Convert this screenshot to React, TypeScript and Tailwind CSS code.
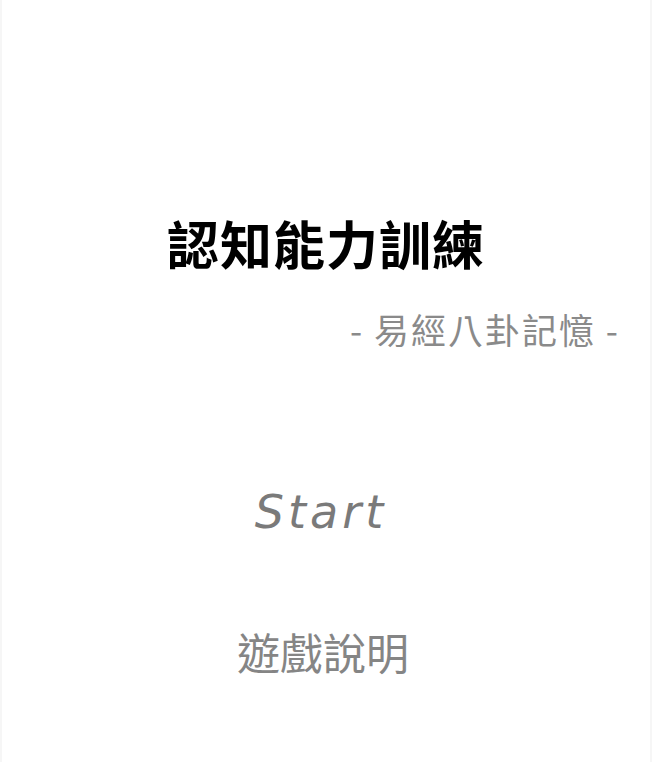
const App = () => {
    return (
        <div className="min-h-screen bg-[#f6f6f6] px-[2px]">
            <div
                className="flex flex-col items-center min-h-screen bg-white"
                style={{ fontFamily: '"Noto Sans CJK TC", "Noto Sans", sans-serif' }}
            >
                {/* title */}
                <h1 className="mt-[217px] text-[52px] leading-none font-semibold text-black tracking-[1px]">
                    認知能力訓練
                </h1>
                <p className="self-end mt-[42px] mr-[30px] text-[35px] leading-none tracking-[2px] text-[#8a8a8a]">
                    - 易經八卦記憶 -
                </p>

                {/* menu */}
                <button
                    className="mt-[143px] mr-[10px] text-[46px] leading-none italic tracking-[4px] text-[#7a7a7a] cursor-pointer"
                    style={{ fontFamily: '"DejaVu Sans", sans-serif' }}
                >
                    Start
                </button>
                <button className="mt-[95px] mr-[6px] text-[43px] leading-none text-[#858585] cursor-pointer">
                    遊戲說明
                </button>
            </div>
        </div>
    );
};

export default App;
